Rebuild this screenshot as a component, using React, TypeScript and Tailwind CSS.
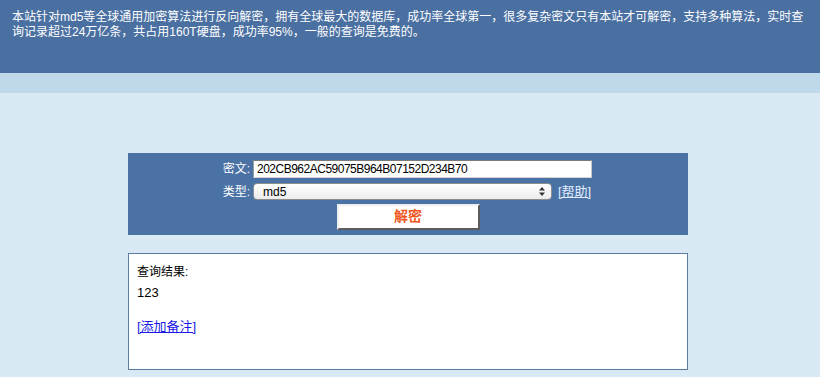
export default function App() {
  return (
    <div className="min-h-screen w-full bg-[#d9e9f4] font-['Liberation_Sans','Noto_Sans_CJK_SC',sans-serif] text-[12px] text-black">
      {/* Intro banner */}
      <div className="h-[73px] bg-[#4a70a2] pl-[12px] pr-[6px] pt-[10px] text-[12px] leading-[15px] text-white">
        本站针对md5等全球通用加密算法进行反向解密，拥有全球最大的数据库，成功率全球第一，很多复杂密文只有本站才可解密，支持多种算法，实时查
        <br />
        询记录超过24万亿条，共占用160T硬盘，成功率95%，一般的查询是免费的。
      </div>
      <div className="h-[20px] bg-[#c0d9ea]" />

      <div className="ml-[128px] mt-[60px] w-[560px]">
        {/* Decrypt form */}
        <div className="flex h-[82px] flex-col bg-[#4b72a4] pt-[7px]">
          <div className="flex items-center pl-[90px]">
            <span className="w-[32px] text-right text-[12px] text-white">密文:</span>
            <input
              className="ml-[3px] h-[18px] w-[339px] border border-t-[#7a7a7a] border-l-[#9a9a9a] border-r-[#c8c8c8] border-b-[#d4d4d4] bg-white px-[3px] text-[12px] tracking-[-0.5px] text-black outline-none"
              defaultValue="202CB962AC59075B964B07152D234B70"
            />
          </div>
          <div className="mt-[4px] flex items-center pl-[90px]">
            <span className="w-[32px] text-right text-[12px] text-white">类型:</span>
            <div className="ml-[3px] flex h-[17px] w-[299px] items-center justify-between rounded-[4px] border border-[#8d8d8d] bg-gradient-to-b from-white to-[#ececec] pl-[9px] pr-[6px] text-[12px] text-black">
              <span>md5</span>
              <svg width="6" height="9" viewBox="0 0 6 9">
                <path d="M3 0 L6 3.5 H0 Z" fill="#333" />
                <path d="M3 9 L6 5.5 H0 Z" fill="#333" />
              </svg>
            </div>
            <a href="#" className="ml-[6px] text-[13px] text-[#e2ecff] underline">
              [帮助]
            </a>
          </div>
          <button className="mx-auto mt-[2px] h-[26px] w-[143px] border-2 border-t-[#eeeeee] border-l-[#eeeeee] border-r-[#5c5c5c] border-b-[#5c5c5c] bg-white text-[14px] font-bold text-[#ef561d]">
            解密
          </button>
        </div>

        {/* Result */}
        <div className="mt-[18px] h-[117px] border border-[#5b7ba4] bg-white pl-[8px] pt-[10px] text-[12px] text-black">
          <div className="leading-[16px]">查询结果:</div>
          <div className="mt-[5px] text-[13px] leading-[16px]">123</div>
          <div className="mt-[18px] leading-[16px]">
            <a href="#" className="text-[13px] text-[#1a1ae6] underline">
              [添加备注]
            </a>
          </div>
        </div>
      </div>
    </div>
  );
}
